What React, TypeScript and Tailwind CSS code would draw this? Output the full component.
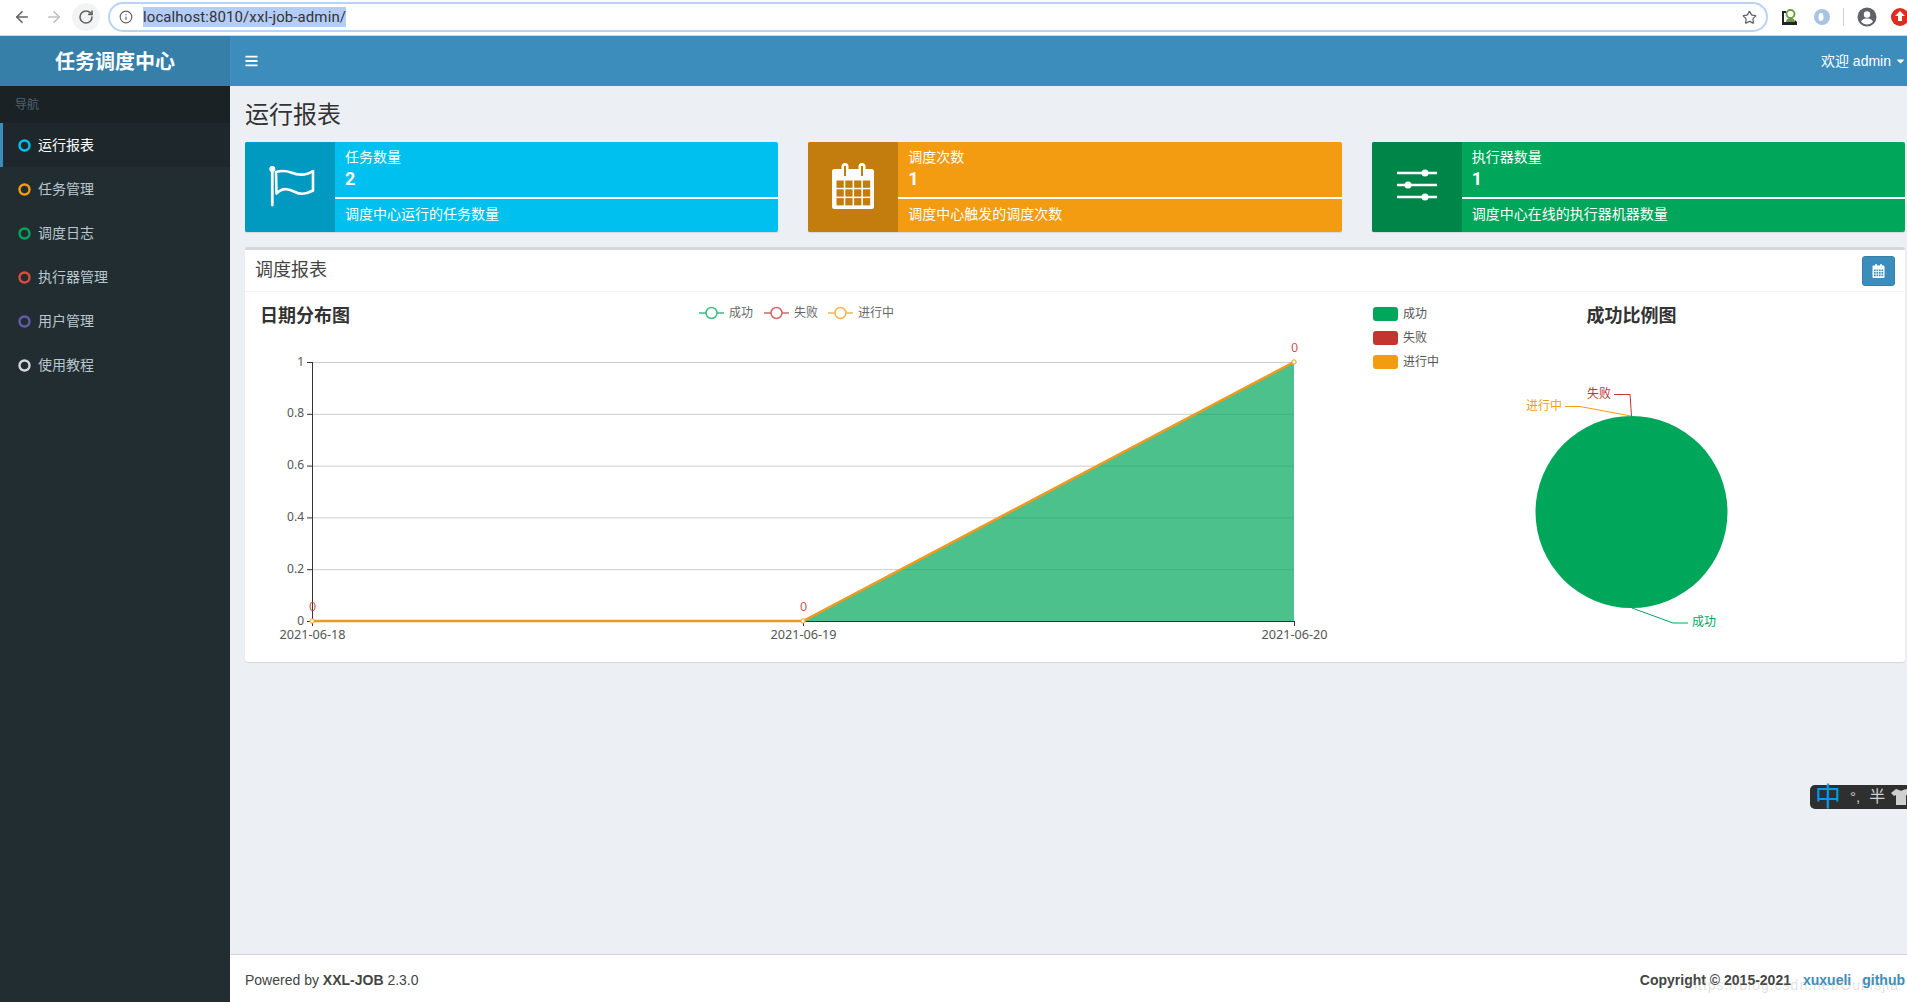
import { ArrowLeft, ArrowRight, RotateCw, Info, Star } from "lucide-react"
import { FaBars, FaCaretDown } from "react-icons/fa"

const navItems = [
  { label: "运行报表", ring: "#00c0ef", active: true },
  { label: "任务管理", ring: "#f39c12" },
  { label: "调度日志", ring: "#00a65a" },
  { label: "执行器管理", ring: "#dd4b39" },
  { label: "用户管理", ring: "#605ca8" },
  { label: "使用教程", ring: "#d2d6de" },
]

function BrowserBar() {
  return (
    <div className="flex h-[36px] items-center border-b border-[#d4d4d4] bg-white pb-[1px]">
      <div className="flex w-[108px] shrink-0 items-center text-[#5f6368]">
        <ArrowLeft className="ml-[13px] h-[18px] w-[18px]" strokeWidth={2.2} />
        <ArrowRight className="ml-[14px] h-[18px] w-[18px] text-[#bdc1c6]" strokeWidth={2.2} />
        <div className="ml-[9px] flex h-[28px] w-[28px] shrink-0 items-center justify-center rounded-full bg-[#f3f3f3]">
          <RotateCw className="h-[16px] w-[16px]" strokeWidth={2.4} />
        </div>
      </div>
      <div className="flex h-[30px] w-[1660px] shrink-0 items-center rounded-full border-2 border-[#b9d3f6] bg-white">
        <Info className="ml-[9px] h-[14px] w-[14px] text-[#5f6368]" strokeWidth={2} />
        <span className="ml-[10px] bg-[#b3cdf8] font-['Roboto',sans-serif] text-[15px] leading-[20px] tracking-[0.1px] text-[#333]">
          localhost:8010/xxl-job-admin/
        </span>
        <Star className="ml-auto mr-[9px] h-[15px] w-[15px] text-[#5f6368]" strokeWidth={2} />
      </div>
      <div className="flex min-w-0 flex-1 items-center">
        <svg viewBox="0 0 18 18" className="ml-[12px] h-[18px] w-[18px] shrink-0">
          <path d="M2 3h4v2H4v9h11v-2l2 2v3H2z" fill="#222" />
          <circle cx="10.500" cy="6" r="4" fill="#fff" stroke="#6d9a3a" strokeWidth="1.800" />
          <path d="M6 14c0-3 2-4 4.500-4s4.500 1 4.500 4z" fill="#6d9a3a" />
        </svg>
        <svg viewBox="0 0 18 18" className="ml-[15px] h-[18px] w-[18px] shrink-0">
          <circle cx="9" cy="9" r="8" fill="#a9c3e2" />
          <path d="M10 2a7 7 0 0 1 0 14a5 5 0 0 0 0-14z" fill="#4f7fb8" />
          <ellipse cx="8" cy="9" rx="2.500" ry="4" fill="#fff" />
        </svg>
        <div className="ml-[12px] h-[18px] w-px shrink-0 bg-[#d0d0d0]" />
        <svg viewBox="0 0 20 20" className="ml-[13px] h-[20px] w-[20px] shrink-0">
          <circle cx="10" cy="10" r="9.500" fill="#5f6368" />
          <circle cx="10" cy="7.500" r="3.200" fill="#fff" />
          <path d="M4 14.500c1.500-2.500 4-3 6-3s4.500.5 6 3c-1.500 2-3.700 3-6 3s-4.500-1-6-3z" fill="#fff" />
        </svg>
        <svg viewBox="0 0 20 20" className="ml-[13px] h-[20px] w-[20px] shrink-0">
          <circle cx="10" cy="10" r="9" fill="#e02b20" />
          <path d="M10 4l5 5h-3v5H8V9H5z" fill="#fff" />
        </svg>
      </div>
    </div>
  )
}

function Sidebar() {
  return (
    <aside className="w-[230px] shrink-0 bg-[#222d32]">
      <div className="flex h-[50px] items-center justify-center bg-[#367fa9] pt-[1px] text-[20px] font-bold text-white">
        任务调度中心
      </div>
      <div className="flex h-[37px] items-center bg-[#1a2226] pl-[15px] text-[12px] text-[#4b646f]">导航</div>
      <ul>
        {navItems.map((item) => (
          <li
            key={item.label}
            className={
              item.active
                ? "flex h-[44px] items-center border-l-[3px] border-[#3c8dbc] bg-[#1e282c] pl-[15px] text-[14px] text-white"
                : "flex h-[44px] items-center border-l-[3px] border-transparent pl-[15px] text-[14px] text-[#b8c7ce]"
            }
          >
            <svg viewBox="0 0 13 13" className="h-[13px] w-[13px] shrink-0">
              <circle cx="6.500" cy="6.500" r="5" fill="none" stroke={item.ring} strokeWidth="2.400" />
            </svg>
            <span className="ml-[7px]">{item.label}</span>
          </li>
        ))}
      </ul>
    </aside>
  )
}

function FlagIcon() {
  return (
    <svg viewBox="0 0 90 90" className="h-[90px] w-[90px]" fill="none" stroke="#fff">
      <circle cx="27.300" cy="27" r="3" fill="#fff" stroke="none" />
      <path d="M27.300 28v35" strokeWidth="2.800" strokeLinecap="round" />
      <path
        d="M31 30c5-1.500 10-1.500 15 .5s13 4.500 22-1.500v19.500c-7 4-13 4-18 1.500s-12-5.500-18.500 1.500z"
        strokeWidth="2.600"
        strokeLinejoin="round"
      />
    </svg>
  )
}

function CalendarIcon() {
  const cols = [28.500, 37.300, 46.100, 54.900]
  const rows = [38.500, 47.300, 56.100]
  return (
    <svg viewBox="0 0 90 90" className="h-[90px] w-[90px]">
      <rect x="24" y="27" width="42" height="40" rx="2.500" fill="#fff" />
      <rect x="33.500" y="21" width="7" height="14" rx="3.500" fill="#fff" />
      <rect x="50.500" y="21" width="7" height="14" rx="3.500" fill="#fff" />
      <rect x="36" y="24" width="2" height="10" fill="#c27d0e" />
      <rect x="53" y="24" width="2" height="10" fill="#c27d0e" />
      {rows.map((y) =>
        cols.map((x) => <rect key={`${x}-${y}`} x={x} y={y} width="7.300" height="7.300" fill="#c27d0e" />),
      )}
    </svg>
  )
}

function SlidersIcon() {
  const sliders = [
    { y: 31, knob: 53 },
    { y: 43, knob: 36 },
    { y: 55, knob: 53 },
  ]
  return (
    <svg viewBox="0 0 90 90" className="h-[90px] w-[90px]">
      {sliders.map((s) => (
        <g key={s.y} fill="#fff">
          <rect x="25" y={s.y - 1.250} width="40" height="2.500" />
          <circle cx={s.knob} cy={s.y} r="3.500" />
        </g>
      ))}
    </svg>
  )
}

function SmallCalendar() {
  const cols = [2, 4.500, 7, 9.500]
  const rows = [5.500, 8, 10.500]
  return (
    <svg viewBox="0 0 13 14" className="h-[14px] w-[13px]">
      <rect x="0.500" y="1.500" width="12" height="12.500" rx="1" fill="#fff" />
      <rect x="3" y="0" width="2" height="3.500" rx="1" fill="#fff" />
      <rect x="8" y="0" width="2" height="3.500" rx="1" fill="#fff" />
      {rows.map((y) => cols.map((x) => <rect key={`${x}-${y}`} x={x} y={y} width="1.700" height="1.700" fill="#3c8dbc" />))}
    </svg>
  )
}

const cards = [
  { title: "任务数量", value: "2", desc: "调度中心运行的任务数量", bg: "bg-[#00c0ef]", iconBg: "bg-[#009ac0]", icon: <FlagIcon /> },
  { title: "调度次数", value: "1", desc: "调度中心触发的调度次数", bg: "bg-[#f39c12]", iconBg: "bg-[#c27d0e]", icon: <CalendarIcon /> },
  { title: "执行器数量", value: "1", desc: "调度中心在线的执行器机器数量", bg: "bg-[#00a65a]", iconBg: "bg-[#008548]", icon: <SlidersIcon /> },
]

function InfoCard({ card }: { card: (typeof cards)[number] }) {
  return (
    <div className={`flex h-[90px] overflow-hidden rounded-[2px] shadow-[0_1px_1px_rgba(0,0,0,0.1)] ${card.bg}`}>
      <div className={`h-[90px] w-[90px] shrink-0 ${card.iconBg}`}>{card.icon}</div>
      <div className="flex-1 text-white">
        <div className="px-[10px] pt-[5px] text-[14px] leading-[20px]">{card.title}</div>
        <div className="h-[30px] px-[10px] font-['Roboto',sans-serif] text-[18px] font-bold leading-[24px]">{card.value}</div>
        <div className="h-[2px] bg-white" />
        <div className="px-[10px] pt-[5px] text-[14px] leading-[20px]">{card.desc}</div>
      </div>
    </div>
  )
}

// drawn in page coordinates so the numbers can be read straight off the screenshot
function LineChart() {
  const ticks = [
    { label: "1", y: 362 },
    { label: "0.8", y: 413.800 },
    { label: "0.6", y: 465.600 },
    { label: "0.4", y: 517.400 },
    { label: "0.2", y: 569.200 },
    { label: "0", y: 621 },
  ]
  const legend = [
    { label: "成功", x: 699, color: "#00a65a" },
    { label: "失败", x: 764, color: "#c23531" },
    { label: "进行中", x: 828, color: "#f39c12" },
  ]
  const points = [
    { x: 312, y: 621 },
    { x: 803, y: 621 },
    { x: 1294, y: 362 },
  ]
  return (
    <svg viewBox="245 292 1116 370" className="h-[370px] w-[1116px] shrink-0 font-['Noto_Sans','Noto_Sans_CJK_SC',sans-serif]">
      <text x="260" y="322" fontSize="18" fontWeight="700" fill="#333" className="font-['Noto_Sans_CJK_SC',sans-serif]">
        日期分布图
      </text>
      {legend.map((l) => (
        <g key={l.label} opacity="0.75">
          <path d={`M${l.x} 313h25`} stroke={l.color} strokeWidth="1.500" />
          <circle cx={l.x + 12.500} cy="313" r="5.500" fill="#fff" stroke={l.color} strokeWidth="1.500" />
          <text x={l.x + 30} y="317" fontSize="12" fill="#333">
            {l.label}
          </text>
        </g>
      ))}
      {ticks.map((t) => (
        <g key={t.label}>
          {t.y !== 621 && <path d={`M312 ${t.y + 0.500}H1294`} stroke="#ccc" />}
          <path d={`M307 ${t.y + 0.500}H312`} stroke="#333" />
          <text x="304" y={t.y + 3.500} fontSize="12" textAnchor="end" fill="#555">
            {t.label}
          </text>
        </g>
      ))}
      <polygon points="803,621 1294,362 1294,621" fill="#00a65a" fillOpacity="0.7" />
      <path d="M312.500 362V626M803.500 621V626M1294.500 621V626" stroke="#333" fill="none" />
      <path d="M312 621.500H1294" stroke="#333" />
      <polyline points="312,621 803,621 1294,362" fill="none" stroke="#ee9a1e" strokeWidth="2.500" />
      {points.map((p) => (
        <g key={p.x}>
          <circle cx={p.x} cy={p.y} r="2.200" fill="#fff" stroke="#f39c12" />
          <text x={p.x + 0.500} y={p.y - 10} fontSize="12.500" textAnchor="middle" fill="#c23531" fillOpacity="0.85">
            0
          </text>
        </g>
      ))}
      {["2021-06-18", "2021-06-19", "2021-06-20"].map((d, i) => (
        <text key={d} x={points[i].x + 0.500} y="639" fontSize="12.700" textAnchor="middle" fill="#555">
          {d}
        </text>
      ))}
    </svg>
  )
}

function PieChart() {
  const legend = [
    { label: "成功", y: 307, color: "#00a65a" },
    { label: "失败", y: 331, color: "#c23531" },
    { label: "进行中", y: 355, color: "#f39c12" },
  ]
  return (
    <svg viewBox="1361 292 544 370" className="h-[370px] w-[544px] shrink-0 font-['Noto_Sans_CJK_SC',sans-serif]">
      {legend.map((l) => (
        <g key={l.label}>
          <rect x="1373" y={l.y} width="25" height="14" rx="3" fill={l.color} />
          <text x="1403" y={l.y + 11} fontSize="12" fill="#555">
            {l.label}
          </text>
        </g>
      ))}
      <text x="1631.500" y="322" fontSize="18" fontWeight="700" fill="#333" textAnchor="middle">
        成功比例图
      </text>
      <circle cx="1631.500" cy="512" r="96" fill="#00a65a" />
      <polyline points="1614,394.500 1630,394.500 1631.500,416" fill="none" stroke="#c23531" />
      <polyline points="1565,406.500 1580,406.500 1631,416" fill="none" stroke="#f39c12" />
      <polyline points="1632,608 1673,623 1688,623" fill="none" stroke="#00a65a" />
      <text x="1587" y="398" fontSize="12" fill="#c23531">失败</text>
      <text x="1526" y="410" fontSize="12" fill="#f39c12">进行中</text>
      <text x="1692" y="626" fontSize="12" fill="#00a65a">成功</text>
    </svg>
  )
}

export default function App() {
  return (
    <div className="relative flex h-screen w-full flex-col overflow-hidden bg-[#ecf0f5] font-['Liberation_Sans','Noto_Sans_CJK_SC',sans-serif] text-[#333]">
      <BrowserBar />
      <div className="flex flex-1">
        <Sidebar />
        <main className="flex min-w-0 flex-1 flex-col">
          <header className="flex h-[50px] shrink-0 items-center justify-between bg-[#3c8dbc] pl-[15px] text-white">
            <FaBars className="h-[14px] w-[13px]" />
            <div className="flex items-center pr-[2px] text-[14px]">
              欢迎 admin
              <FaCaretDown className="ml-[5px] h-[12px] w-[9px]" />
            </div>
          </header>
          <section className="flex-1 pl-[15px] pr-[2px]">
            <h1 className="flex h-[56px] items-center pt-[2px] text-[24px] font-normal">运行报表</h1>
            <div className="grid grid-cols-3 gap-[30px]">
              {cards.map((c) => (
                <InfoCard key={c.title} card={c} />
              ))}
            </div>
            <div className="mt-[15px] rounded-[3px] border-t-[3px] border-[#d2d6de] bg-white shadow-[0_1px_1px_rgba(0,0,0,0.1)]">
              <div className="flex h-[42px] items-center justify-between border-b border-[#f4f4f4] pl-[10px] pr-[10px]">
                <span className="text-[18px] text-[#444]">调度报表</span>
                <button className="flex h-[30px] w-[33px] items-center justify-center rounded-[3px] border border-[#367fa9] bg-[#3c8dbc] text-white">
                  <SmallCalendar />
                </button>
              </div>
              <div className="flex">
                <LineChart />
                <PieChart />
              </div>
            </div>
          </section>
          <footer className="relative flex h-[48px] shrink-0 items-center justify-between border-t border-[#d2d6de] bg-white pl-[15px] pr-[2px] pt-[4px] text-[14px] text-[#444]">
            <div>
              Powered by <b>XXL-JOB</b> 2.3.0
            </div>
            <div className="flex font-bold">
              <span>Copyright © 2015-2021</span>
              <span className="ml-[12px] text-[#3c8dbc]">xuxueli</span>
              <span className="ml-[11px] text-[#3c8dbc]">github</span>
            </div>
            <span className="absolute right-[8px] top-[20px] text-[14px] tracking-[1px] text-[#999]/30">
              https://blog.csdn.net/Ouhlsjia
            </span>
          </footer>
        </main>
      </div>
      {/* IME status bar floating over the page */}
      <div className="absolute left-[1810px] top-[785px] flex h-[24px] w-[97px] items-center rounded-l-[5px] bg-[#2f2f2f] text-[#d0d0d0]">
        <span className="ml-[5px] w-[26px] text-center text-[26px] leading-[24px] text-[#0a9ae0]">中</span>
        <span className="ml-[9px] w-[11px] text-[15px] leading-[20px]">°,</span>
        <span className="ml-[9px] text-[16px] leading-[20px]">半</span>
        <svg viewBox="0 0 20 20" className="ml-[6px] h-[20px] w-[20px] shrink-0">
          <path d="M5 2l3 1c1 1 3 1 4 0l3-1 5 4-3 3-2-1v10H5V8L3 9 0 6z" fill="#d0d0d0" />
        </svg>
      </div>
    </div>
  )
}
